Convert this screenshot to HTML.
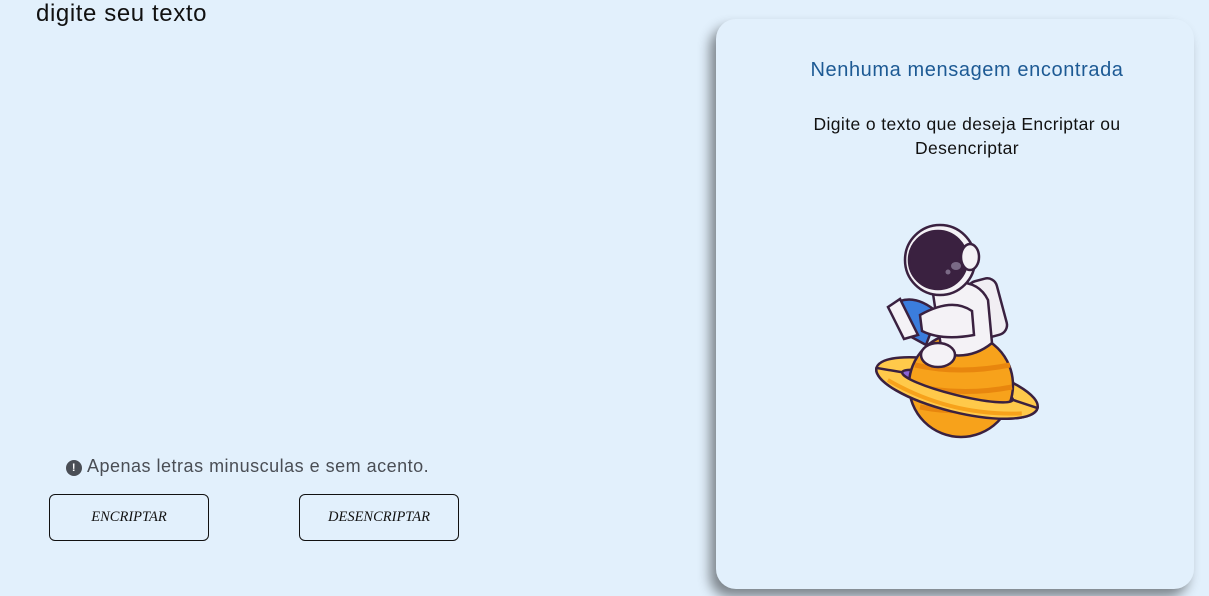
<!DOCTYPE html>
<html><head><style>
body{margin:0;width:1209px;height:596px;background:#e2f0fc;font-family:"Liberation Sans",sans-serif;position:relative;overflow:hidden}
.t{position:absolute;left:36px;top:0;font-size:24px;letter-spacing:0.6px;color:#111}
.note{position:absolute;left:66px;top:456px;font-size:18px;letter-spacing:0.5px;color:#4a4e55}
.note i{display:inline-block;width:16px;height:16px;border-radius:50%;background:#4a4e55;color:#fff;font-size:11px;text-align:center;line-height:16px;font-style:normal;font-weight:bold;vertical-align:1px;margin-right:5px}
.b{position:absolute;top:494px;border:1px solid #111;border-radius:6px;font-family:"Liberation Serif",serif;font-style:italic;font-size:14.5px;line-height:45px;text-align:center;color:#111;box-sizing:border-box;width:160px;height:47px}
.card{position:absolute;left:716px;top:19px;width:478px;height:570px;border-radius:20px;background:#e2f0fc;box-shadow:-6px 8px 12px rgba(0,0,0,.45)}
.h{position:absolute;left:0;width:100%;text-align:center;padding-left:24px;box-sizing:border-box}
</style></head><body>
<div class="t">digite seu texto</div>
<div class="note"><i>!</i>Apenas letras minusculas e sem acento.</div>
<div class="b" style="left:49px">ENCRIPTAR</div>
<div class="b" style="left:299px">DESENCRIPTAR</div>
<div class="card">
<div class="h" style="top:40px;font-size:20px;letter-spacing:0.6px;color:#1d5a94">Nenhuma mensagem encontrada</div>
<div class="h" style="top:93px;font-size:17.5px;letter-spacing:0.4px;color:#111;line-height:24px">Digite o texto que deseja Encriptar ou<br>Desencriptar</div>
</div>
<svg style="position:absolute;left:860px;top:215px" width="190" height="230" viewBox="0 0 190 230" stroke="#3a2140" stroke-width="2.5">
<g transform="rotate(14 97 173)">
<ellipse cx="97" cy="173" rx="83" ry="24" fill="#ffc94a"/>
<ellipse cx="97" cy="171" rx="57" ry="9" fill="#8a64d6"/>
</g>
<circle cx="101" cy="170" r="52" fill="#f7a21b"/>
<path d="M55 150 Q100 160 150 150 M52 170 Q100 182 152 172 M60 192 Q100 200 146 192" stroke="#e8860e" stroke-width="5" fill="none"/>
<g transform="rotate(14 97 173)">
<path d="M14 173 A83 24 0 0 0 180 173 L154 171 A57 9 0 0 1 40 171 Z" fill="#ffc94a"/>
<path d="M28 182 Q97 202 166 182" stroke="#f7a21b" stroke-width="4" fill="none"/>
</g>
<rect x="112" y="64" width="30" height="58" rx="10" fill="#f1eef3" transform="rotate(-15 127 92)"/>
<path d="M72 72 Q115 58 128 85 L132 128 Q110 146 82 138 Z" fill="#f4f2f6"/>
<path d="M40 86 Q58 80 78 98 L66 130 L44 118 Z" fill="#3b7ddd"/>
<path d="M28 92 L40 84 L58 120 L44 124 Z" fill="#f4f2f6"/>
<path d="M60 100 Q92 82 112 96 L114 120 Q82 126 62 116 Z" fill="#f4f2f6"/>
<ellipse cx="78" cy="140" rx="17" ry="12" fill="#f4f2f6"/>
<circle cx="80" cy="45" r="35" fill="#f4f2f6"/>
<circle cx="78" cy="45" r="29" fill="#3a2140"/>
<ellipse cx="96" cy="51" rx="5" ry="4" fill="#7a6a86" stroke="none"/>
<circle cx="88" cy="57" r="2.5" fill="#7a6a86" stroke="none"/>
<ellipse cx="110" cy="42" rx="9" ry="13" fill="#f4f2f6"/>
</svg>
</body></html>
